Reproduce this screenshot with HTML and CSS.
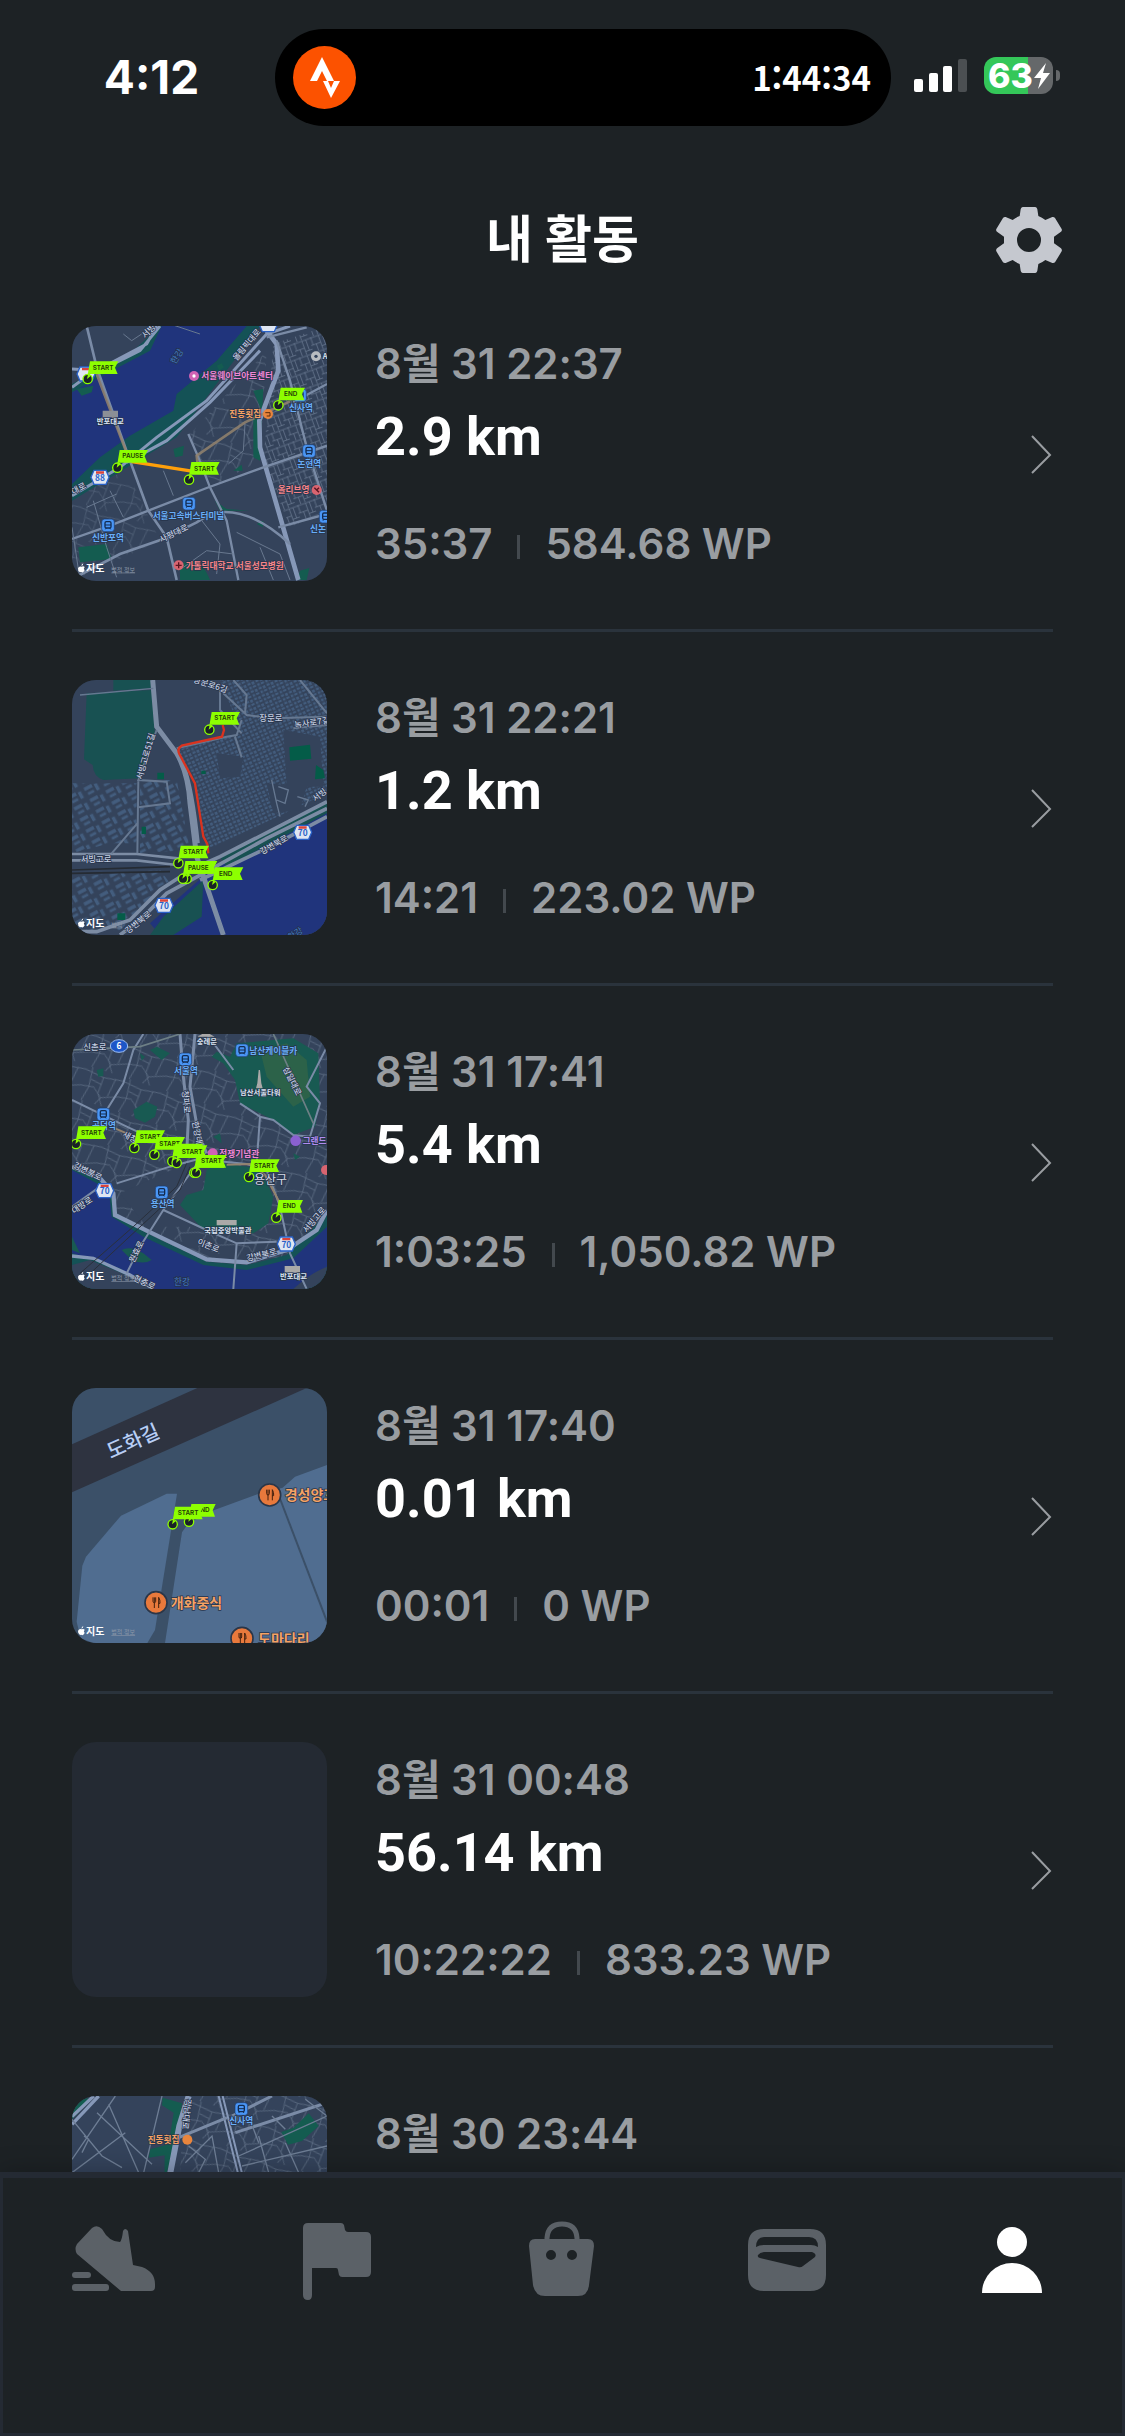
FILE: index.html
```html
<!DOCTYPE html>
<html lang="ko">
<head>
  <meta charset="UTF-8" />
  <meta name="viewport" content="width=device-width, initial-scale=1" />
  <title>내 활동</title>
  <link rel="stylesheet" href="styles.css">
</head>
<body>
  <!-- shared map symbols -->
  <svg class="defs" width="0" height="0" aria-hidden="true">
    <defs>
      <g id="flag">
        <path d="M7-53H92L82-34L90-15H4L2 0H-2Z" fill="#8dff00"/>
        <circle r="14" fill="#1a2127" stroke="#8dff00" stroke-width="4"/>
        <path d="M-2 0L1-14L10-10Z" fill="#8dff00"/>
      </g>
      <g id="flag-short">
        <path d="M7-53H80L71-34L78-15H4L2 0H-2Z" fill="#8dff00"/>
        <circle r="14" fill="#1a2127" stroke="#8dff00" stroke-width="4"/>
        <path d="M-2 0L1-14L10-10Z" fill="#8dff00"/>
      </g>
      <g id="station">
        <rect x="-19" y="-19" width="38" height="38" rx="9" fill="#4a96f5" stroke="#1c3a6b" stroke-width="2"/>
        <rect x="-9" y="-11" width="18" height="19" rx="4" fill="none" stroke="#132c52" stroke-width="4"/>
        <path d="M-9-1H9M-8 12L-5 8M8 12L5 8" stroke="#132c52" stroke-width="3"/>
      </g>
      <g id="shield">
        <path d="M-18-21H18L27 0L18 21H-18L-27 0Z" fill="#dfe6f2" stroke="#2a62c8" stroke-width="4"/>
        <path d="M-12-18H12V-11H-12Z" fill="#d9443c"/>
      </g>
      <g id="food">
        <circle r="33" fill="#e8793c" stroke="#2b3648" stroke-width="5"/>
        <path d="M-9-16V-4Q-9 0-5 0V16M-5-16V0M-1-16V-4Q-1 0-5 0M8-16V16M8-16Q13-8 12 2H8" fill="none" stroke="#43200e" stroke-width="3"/>
      </g>
      <g id="maps-logo">
        <path d="M-1-9Q0-15 5-17Q5-11-1-9M0-7Q5-10 9-6Q4 0 9 4Q5 12 1 10Q-2 8-5 10Q-12 6-11-2Q-8-10 0-7Z" fill="#fff"/>
      </g>
      <pattern id="streets" width="52" height="46" patternUnits="userSpaceOnUse" patternTransform="rotate(-20)">
        <path d="M0 3H52M0 25H30M30 36H52M6 0V25M30 3V46M42 3V36M16 25V46" stroke="#6d7d94" stroke-width="2" fill="none"/>
      </pattern>
      <pattern id="town" width="118" height="104" patternUnits="userSpaceOnUse" patternTransform="rotate(18)">
        <path d="M0 12L60 20L118 12M0 62L40 56L70 80L118 62M20 0L26 60L16 104M60 20L58 70L80 104M96 14L88 70M26 36L60 42M70 80L58 104" stroke="#64748a" stroke-width="2" fill="none"/>
      </pattern>
      <pattern id="houses" width="26" height="24" patternUnits="userSpaceOnUse" patternTransform="rotate(-24)">
        <path d="M2 2H11V9H2ZM15 3H23V11H15ZM3 14H10V22H3ZM14 15H24V21H14Z" fill="#435d7e"/>
      </pattern>
      <pattern id="blocks" width="54" height="38" patternUnits="userSpaceOnUse" patternTransform="rotate(-28)">
        <path d="M4 4H30V14H4ZM36 8H46V30H36ZM8 22H28V30H8Z" fill="#435d7e"/>
      </pattern>
    </defs>
  </svg>

  <div class="app">
    <div class="status-bar">
      <div class="clock">4:12</div>
      <div class="island">
        <svg class="island-logo" viewBox="0 0 63 63">
          <ellipse cx="50%" cy="50%" rx="50%" ry="50%" fill="#fc5200"/>
          <path d="M17 35L29 11L41 35H34L29 25L24 35Z" fill="#fff"/>
          <path d="M30 35H35L38 42L41 35H47L38 52Z" fill="#fff"/>
        </svg>
        <span class="island-time">1:44:34</span>
      </div>
      <div class="indicators">
        <svg class="signal" viewBox="0 0 53 33">
          <rect x="0" y="20" width="9" height="13" rx="2" fill="#fff"/>
          <rect x="15" y="14" width="9" height="19" rx="2" fill="#fff"/>
          <rect x="29" y="7" width="9" height="26" rx="2" fill="#fff"/>
          <rect x="44" y="0" width="9" height="33" rx="2" fill="#4b4f52"/>
        </svg>
        <div class="battery">
          <span>63</span>
          <svg class="bolt" viewBox="0 0 16 26"><path d="M12 0L0 15H7L4 26L16 10H9Z" fill="#fff"/></svg>
        </div>
      </div>
    </div>

    <header class="header">
      <h1>내 활동</h1>
      <button class="settings" aria-label="설정">
        <svg viewBox="0 0 198 198">
          <path fill="#c5c8cf" fill-rule="evenodd" d="M80 0H118Q123 1 124 7L127 27Q138 31 148 39L169 30Q174 29 177 33L197 66Q199 70 195 74L174 89V109L195 124Q199 128 197 133L177 166Q174 169 169 168L148 159Q138 167 127 171L124 191Q123 197 118 198H80Q75 197 74 191L71 171Q60 167 50 159L29 168Q24 169 21 166L1 133Q-1 128 3 124L24 109V89L3 74Q-1 70 1 66L21 33Q24 29 29 30L50 39Q60 31 71 27L74 7Q75 1 80 0ZM99 63A36 36 0 1 0 99 135A36 36 0 1 0 99 63Z"/>
        </svg>
      </button>
    </header>

    <main class="activities">
      <a class="activity" href="#">
        <svg class="thumb" viewBox="36 36 765 765">
          <rect x="36" y="36" width="765" height="765" fill="#34435b"/>
          <path d="M640 90L801 36V590L690 640L610 440Z" fill="url(#streets)"/>
          <path d="M390 360L620 110L600 440L450 520Z" fill="url(#town)"/>
          <path d="M36 540L200 470L300 680L36 800Z" fill="url(#town)" opacity=".7"/>
          <path d="M36 210L220 110L300 36H600L350 370L36 560Z" fill="#145256"/>
          <path d="M36 235L90 205L270 110L305 36H560L470 140L350 240L340 290L210 365L120 430L36 510Z" fill="#20347c"/>
          <path d="M50 225L100 215L95 235L65 245ZM470 155L485 148L492 160L478 170ZM580 230L610 225L600 440L580 430V300L600 280ZM340 405L372 395L368 425L345 430ZM520 470L545 452L548 470ZM55 700L140 690L155 735L60 745ZM720 770L748 762L740 798H712ZM360 750Q420 720 450 798H360ZM590 630L610 620L608 640ZM465 560L500 585L570 590H480Z" fill="#145c50"/>
          <g fill="none" stroke="#8698b8">
            <path d="M36 165L120 170L240 110L300 36M36 220L90 180L260 90L290 36" stroke-width="9"/>
            <path d="M36 545L180 460L290 370L440 260L620 60L690 36M200 445L320 380L450 265L600 110" stroke-width="9"/>
            <path d="M610 36L650 90L655 170L598 320L600 400L715 798" stroke-width="14"/>
            <path d="M36 675L150 635L290 580L440 522L610 460L801 395" stroke-width="7" stroke="#7a8ba6"/>
            <path d="M36 795L180 720L310 675L410 625L450 600Q560 570 690 690M80 36L110 160L210 440L265 590L320 670L350 798" stroke-width="8" stroke="#7a8ba6"/>
            <path d="M385 360L415 430L450 520L500 620L535 798M655 640L801 600M650 80L690 200L740 400L801 590M620 70L740 40M700 265L801 210" stroke-width="7" stroke="#7a8ba6"/>
            <path d="M100 560L140 700L170 790M310 470L340 545M150 530L190 610M80 580L170 540M36 640L60 798M370 760L440 710L520 720M530 655L660 720L690 798M410 600L480 690L470 780M420 60L330 30M190 60L215 80L245 60M555 330L550 410L505 450M600 700L640 798" stroke-width="3" stroke="#68788f"/>
          </g>
          <path d="M110 180L205 430M415 470L410 425L555 325L690 262" fill="none" stroke="#93826d" stroke-width="8" opacity=".85"/>
          <path d="M215 443L400 472" stroke="#ff9f0a" stroke-width="10"/>
          <use href="#shield" x="78" y="180"/><use href="#shield" x="120" y="490"/><use href="#shield" x="625" y="32"/>
          <text class="route" x="120" y="501">88</text>
          <circle cx="402" cy="186" r="15" fill="#cf62b4"/><circle cx="402" cy="186" r="5" fill="#fff"/>
          <circle cx="768" cy="127" r="15" fill="#b8bcc0"/><circle cx="768" cy="127" r="5" fill="#34435b"/>
          <text class="place pale" x="788" y="136">A</text>
          <circle cx="624" cy="300" r="15" fill="#e8853d"/><path d="M616 296H630V306H620" fill="none" stroke="#5a2a0c" stroke-width="3"/>
          <circle cx="770" cy="528" r="15" fill="#d86470"/><path d="M763 521L777 535M777 521L770 528" stroke="#5a1520" stroke-width="4"/>
          <circle cx="356" cy="754" r="15" fill="#d86470"/><path d="M356 745V763M347 754H365" stroke="#5a1520" stroke-width="4"/>
          <use href="#station" x="720" y="244"/><use href="#station" x="747" y="411"/><use href="#station" x="387" y="569"/><use href="#station" x="144" y="634"/><use href="#station" x="797" y="608"/>
          <text class="place pink" x="424" y="196">서울웨이브아트센터</text>
          <text class="place orange" x="508" y="310">진동횟집</text>
          <text class="place blue" x="687" y="291">신사역</text>
          <text class="place blue" x="712" y="458">논현역</text>
          <text class="place red" x="653" y="537">올리브영</text>
          <text class="place blue" x="278" y="614">서울고속버스터미널</text>
          <text class="place blue" x="96" y="680">신반포역</text>
          <text class="place blue" x="750" y="654">신논</text>
          <text class="place red" x="377" y="764">가톨릭대학교 서울성모병원</text>
          <text class="place pale" x="110" y="330">반포대교</text>
          <path d="M128 290H174V310H128Z" fill="#8b8f96"/>
          <text class="place water" transform="translate(346 152) rotate(-58)">한강</text>
          <text class="road" transform="translate(530 142) rotate(-50)">올림픽대로</text>
          <text class="road" transform="translate(304 686) rotate(-26)">사평대로</text>
          <text class="road" transform="translate(256 74) rotate(-45)">서빙</text>
          <text class="road" transform="translate(40 542) rotate(-28)">대로</text>
          <use href="#flag" x="83" y="195"/><text class="pin" x="129" y="168">START</text>
          <use href="#flag" x="172" y="461"/><text class="pin" x="218" y="433">PAUSE</text>
          <use href="#flag" x="387" y="497"/><text class="pin" x="433" y="470">START</text>
          <use href="#flag-short" x="655" y="274"/><text class="pin" x="692" y="247">END</text>
          <use href="#maps-logo" x="65" y="765"/><text class="brand" x="78" y="774">지도</text>
          <text class="legal" x="154" y="773">법적 정보</text>
        </svg>
        <div class="info">
          <time class="date">8월 31 22:37</time>
          <strong class="distance">2.9 km</strong>
          <div class="meta"><span>35:37</span><span>584.68 WP</span></div>
        </div>
        <svg class="chevron" viewBox="0 0 22 40"><path d="M1 2L19 21L1 39"/></svg>
      </a>

      <a class="activity" href="#">
        <svg class="thumb" viewBox="36 30 765 765">
          <rect x="36" y="30" width="765" height="765" fill="#34435b"/>
          <path d="M480 30H801V370L440 540L400 330L350 240L545 190Z" fill="url(#houses)"/>
          <path d="M36 340H230V520H150L36 550ZM240 330H350L390 540L240 550ZM36 620L300 600L330 640L180 780L36 795Z" fill="url(#blocks)"/>
          <path d="M470 250L550 260L540 320L480 325ZM670 180L780 200L790 350L680 350ZM620 340L740 350L720 420L640 430Z" fill="#34435b"/>
          <path d="M80 70L275 60L285 200L240 325L130 330Q100 320 98 285L72 268ZM160 30H275V55L160 62Z" fill="#185152"/>
          <path d="M688 232L750 224L754 266L690 272ZM768 285L790 300L795 325L765 328ZM292 308H312V328H292ZM245 470H258V492H245ZM172 730H196V750H172ZM424 302H437V312H424Z" fill="#045c48"/>
          <path d="M801 410L440 610L270 760L300 795H801Z" fill="#20347c"/>
          <path d="M801 395L640 480L480 560L500 590L801 430ZM430 630L310 740L270 795H340L425 740Z" fill="#185152"/>
          <g fill="none" stroke="#7c8ca4">
            <path d="M36 552H230L360 566M36 571H230L350 585" stroke-width="8"/>
            <path d="M278 30L290 170L350 250Q385 310 390 400L410 560L490 795M370 290Q395 360 412 520" stroke-width="15"/>
            <path d="M801 395L480 560L400 595L300 660L210 750L110 785H36M801 415L620 505L430 610L320 670L240 750L180 795M801 440L640 525L420 630" stroke-width="11"/>
            <path d="M235 330L232 550M290 180L235 330L320 335L330 400L235 412M232 460L155 550M350 235L500 200L530 195L545 150M480 60V120L545 190M490 70L560 135L640 145L801 140M720 30L801 130M700 175L801 165M525 200L545 262M520 30L560 75L555 130" stroke-width="6" stroke="#667891"/>
            <path d="M635 330L650 400L660 440M655 350L685 360L675 400L650 390M712 380L745 390L735 410M60 75L280 55" stroke-width="4" stroke="#667891"/>
          </g>
          <path d="M36 600L330 590M36 610L330 605" stroke="#252b33" stroke-width="5"/>
          <path d="M488 165L492 180L486 200L365 227Q350 235 358 252L405 340L430 500L442 522L445 550" fill="none" stroke="#d9331f" stroke-width="7"/>
          <use href="#shield" x="728" y="487"/><text class="route" x="728" y="498">70</text>
          <use href="#shield" x="312" y="706"/><text class="route" x="312" y="717">70</text>
          <text class="road" x="598" y="153">장문로</text>
          <text class="road" transform="translate(704 174) rotate(-8)">녹사로7길</text>
          <text class="road" transform="translate(398 36) rotate(18)">장문로6길</text>
          <text class="road" transform="translate(246 330) rotate(-74)">서빙고로51길</text>
          <text class="road" x="62" y="575">서빙고로</text>
          <text class="road" transform="translate(606 554) rotate(-29)">강변북로</text>
          <text class="road" transform="translate(204 792) rotate(-38)">강변북로</text>
          <text class="road" transform="translate(766 396) rotate(-38)">서빙</text>
          <text class="place water" transform="translate(690 812) rotate(-32)">한강</text>
          <use href="#flag" x="448" y="179"/><text class="pin" x="494" y="151">START</text>
          <use href="#flag" x="355" y="580"/><text class="pin" x="401" y="553">START</text>
          <use href="#flag" x="380" y="626"/>
          <use href="#flag" x="369" y="626"/><text class="pin" x="415" y="600">PAUSE</text>
          <use href="#flag" x="458" y="645"/><text class="pin" x="497" y="618">END</text>
          <use href="#maps-logo" x="65" y="762"/><text class="brand" x="78" y="770">지도</text>
          <text class="legal" x="154" y="770">법적</text>
        </svg>
        <div class="info">
          <time class="date">8월 31 22:21</time>
          <strong class="distance">1.2 km</strong>
          <div class="meta"><span>14:21</span><span>223.02 WP</span></div>
        </div>
        <svg class="chevron" viewBox="0 0 22 40"><path d="M1 2L19 21L1 39"/></svg>
      </a>

      <a class="activity" href="#">
        <svg class="thumb" viewBox="36 42 765 765">
          <rect x="36" y="42" width="765" height="765" fill="#34435b"/>
          <rect x="36" y="42" width="765" height="765" fill="url(#town)"/>
          <path d="M180 520L380 430L440 440L400 620H260Z" fill="#34435b"/>
          <path d="M530 70L700 55L775 100L780 250L765 320L700 345L640 300L540 250L525 180L490 130L455 110L470 95L510 110ZM220 270L260 245L292 260L285 290L255 308L225 295ZM440 450L480 430L600 445L640 530L625 610L580 640H440L360 555L380 525L430 510Z" fill="#185a52"/>
          <path d="M270 90L290 80L330 100L305 120ZM240 100L255 110L245 122ZM110 150L130 145V168L115 170ZM460 350L480 340L485 370ZM700 400L720 410L705 420Z" fill="#185a52"/>
          <path d="M600 90L680 70L740 120L750 230L700 260L620 170Z" fill="#2c6249"/>
          <path d="M36 440L120 480L160 510L170 580L260 640L440 725L560 735L680 705L801 580V807H36Z" fill="#145256"/>
          <path d="M36 450L110 490L148 525L155 590L250 650L430 735L560 750L700 715L801 620V740L700 807H260L180 745L36 700Z" fill="#20347c"/>
          <path d="M36 735L90 720L210 770L280 807H36Z" fill="#34435b"/>
          <path d="M185 690Q210 675 250 700L275 720Q250 735 215 720ZM36 650L60 700L36 690Z" fill="#185a52"/>
          <path d="M700 807Q750 760 801 740V807Z" fill="#34435b"/>
          <g fill="none" stroke="#8698b8">
            <path d="M36 440L120 475L160 520L165 585L260 632L440 718L560 727L680 690L770 630L801 570" stroke-width="13"/>
            <path d="M36 708L100 715L210 765L280 807" stroke-width="10"/>
            <path d="M360 42L370 170L385 300L380 400M405 42L390 200L415 340L440 400" stroke-width="9" stroke="#7a8ba6"/>
            <path d="M250 42L220 90L190 190L140 270M36 240L200 320L330 380L440 420L560 432L620 450L660 560L690 700L740 807M170 490L330 440L440 410M420 420L310 570L240 680L200 760M310 570L440 630L530 670L650 665M36 560L120 500M530 670L520 807M600 290L590 430M600 290L540 250M600 290L640 300L700 345L750 350L780 250L740 200L801 80M440 42L520 150" stroke-width="6" stroke="#7a8ba6"/>
            <path d="M640 42L760 310M36 90L240 80L360 42" stroke-width="5" stroke="#6d7f85"/>
            <path d="M380 430L350 500L220 620L60 760M390 440L360 510L230 630L80 770" stroke="#2a303c" stroke-width="3"/>
          </g>
          <path d="M500 434L570 432L615 465L660 550M165 325L200 340" fill="none" stroke="#93826d" stroke-width="6"/>
          <ellipse cx="177" cy="78" rx="26" ry="19" fill="#1d56c8" stroke="#9fc0f5" stroke-width="3"/>
          <text class="route light" x="177" y="87">6</text>
          <use href="#shield" x="134" y="512"/><text class="route" x="134" y="523">70</text>
          <use href="#shield" x="679" y="672"/><text class="route" x="679" y="683">70</text>
          <use href="#station" x="376" y="118"/><use href="#station" x="546" y="91"/><use href="#station" x="130" y="283"/><use href="#station" x="305" y="517"/>
          <circle cx="707" cy="362" r="16" fill="#8a60d0"/><circle cx="458" cy="400" r="15" fill="#cf62b4"/><circle cx="798" cy="450" r="15" fill="#d86470"/>
          <path d="M596 150H600L604 190L608 205H588L592 190ZM470 600H530V616H470ZM674 738H720V758H674ZM412 50L438 36L464 50Z" fill="#aaa9a8"/>
          <text class="road" x="70" y="90">신촌로</text>
          <text class="place pale" x="410" y="72">숭례문</text>
          <text class="place blue" x="568" y="102">남산케이블카</text>
          <text class="place blue" x="342" y="163">서울역</text>
          <text class="place pale" x="540" y="226">남산서울타워</text>
          <text class="place blue" x="96" y="328">공덕역</text>
          <text class="place purple" x="728" y="372">그랜드</text>
          <text class="place pink" x="478" y="410">전쟁기념관</text>
          <text class="district" x="582" y="491">용산구</text>
          <text class="place blue" x="272" y="562">용산역</text>
          <text class="place pale" x="433" y="638">국립중앙박물관</text>
          <text class="place pale" x="660" y="778">반포대교</text>
          <text class="place water" x="342" y="796">한강</text>
          <text class="road" transform="translate(366 212) rotate(84)">청파로</text>
          <text class="road" transform="translate(396 306) rotate(78)">한강대</text>
          <text class="road" transform="translate(668 146) rotate(63)">삼일대로</text>
          <text class="road" transform="translate(186 348) rotate(30)">새창</text>
          <text class="road" transform="translate(38 442) rotate(26)">강변북로</text>
          <text class="road" transform="translate(410 672) rotate(22)">이촌로</text>
          <text class="road" transform="translate(562 724) rotate(-14)">강변북로</text>
          <text class="road" transform="translate(740 640) rotate(-50)">서빙고로</text>
          <text class="road" transform="translate(222 730) rotate(-64)">원효로</text>
          <text class="road" transform="translate(42 582) rotate(-34)">대방로</text>
          <text class="road" transform="translate(218 780) rotate(26)">현충로</text>
          <use href="#flag" x="48" y="372"/><text class="pin" x="94" y="345">START</text>
          <use href="#flag" x="223" y="384"/><text class="pin" x="270" y="357">START</text>
          <use href="#flag" x="283" y="404"/><text class="pin" x="329" y="377">START</text>
          <use href="#flag" x="337" y="424"/>
          <use href="#flag" x="350" y="429"/><text class="pin" x="396" y="402">START</text>
          <use href="#flag" x="403" y="458"/>
          <use href="#flag" x="408" y="458"/><text class="pin" x="454" y="430">START</text>
          <use href="#flag" x="567" y="471"/><text class="pin" x="613" y="444">START</text>
          <use href="#flag-short" x="649" y="593"/><text class="pin" x="688" y="565">END</text>
          <use href="#maps-logo" x="65" y="772"/><text class="brand" x="78" y="781">지도</text>
          <text class="legal" x="154" y="780">법적 정보</text>
        </svg>
        <div class="info">
          <time class="date">8월 31 17:41</time>
          <strong class="distance">5.4 km</strong>
          <div class="meta"><span>1:03:25</span><span>1,050.82 WP</span></div>
        </div>
        <svg class="chevron" viewBox="0 0 22 40"><path d="M1 2L19 21L1 39"/></svg>
      </a>

      <a class="activity" href="#">
        <svg class="thumb" viewBox="36 39 765 765">
          <rect x="36" y="39" width="765" height="765" fill="#3b5068"/>
          <path d="M36 208L412 39H740L36 352Z" fill="#2e3340"/>
          <path d="M320 356H351L285 765L262 804H100L62 790L50 740L67 572L78 545L183 422Z" fill="#506d90"/>
          <path d="M801 270L705 305L668 338L600 355L455 408L385 445L366 472L315 804H801Z" fill="#506d90"/>
          <path d="M650 345L801 740" stroke="#3b5068" stroke-width="6"/>
          <text class="street" transform="translate(152 252) rotate(-24)">도화길</text>
          <use href="#food" x="629" y="360"/><text class="shop" x="674" y="376">경성양꼬</text>
          <use href="#food" x="288" y="683"/><text class="shop" x="332" y="700">개화중식</text>
          <use href="#food" x="546" y="790"/><text class="shop" x="594" y="806">도마다리</text>
          <use href="#flag-short" x="387" y="440"/><text class="pin" x="429" y="412">END</text>
          <use href="#flag" x="338" y="448"/><text class="pin" x="384" y="420">START</text>
          <use href="#maps-logo" x="65" y="770"/><text class="brand" x="78" y="779">지도</text>
          <text class="legal" x="154" y="778">법적 정보</text>
        </svg>
        <div class="info">
          <time class="date">8월 31 17:40</time>
          <strong class="distance">0.01 km</strong>
          <div class="meta"><span>00:01</span><span>0 WP</span></div>
        </div>
        <svg class="chevron" viewBox="0 0 22 40"><path d="M1 2L19 21L1 39"/></svg>
      </a>

      <a class="activity" href="#">
        <div class="thumb"></div>
        <div class="info">
          <time class="date">8월 31 00:48</time>
          <strong class="distance">56.14 km</strong>
          <div class="meta"><span>10:22:22</span><span>833.23 WP</span></div>
        </div>
        <svg class="chevron" viewBox="0 0 22 40"><path d="M1 2L19 21L1 39"/></svg>
      </a>

      <a class="activity" href="#">
        <svg class="thumb" viewBox="0 0 765 765">
          <rect width="765" height="765" fill="#34435b"/>
          <path d="M335 0H765V765H300Z" fill="url(#town)"/>
          <path d="M272 5L330 22L310 140L285 228V765H272L278 178L230 185L235 160L290 145L305 50L270 28ZM710 52L740 90L690 135L648 146L628 108L665 95ZM0 20L50 5L20 50L0 70Z" fill="#145c50"/>
          <g fill="none" stroke="#8698b8">
            <path d="M0 62L65 0M0 85L80 0" stroke-width="10"/>
            <path d="M350 0L322 90L295 230" stroke-width="18"/>
            <path d="M440 0L470 120L500 240M452 0L482 120L512 240" stroke-width="6"/>
            <path d="M480 60L600 0M320 125L465 65M490 110L765 20" stroke-width="9" stroke="#7a8ba6"/>
            <path d="M0 190L130 0M75 50L240 205M110 25L200 230M0 70L90 180L150 215M36 120L50 130L30 170M270 0L215 230M500 180L765 60M510 210L765 150M340 200L420 120L440 230M350 150L400 190L380 230M560 120L590 230M640 140L680 230M600 60L640 100M530 60L560 140M700 10L765 60M0 230L160 110" stroke-width="4" stroke="#6d7d94"/>
          </g>
          <use href="#station" x="508" y="39"/><text class="place blue" x="472" y="85">신사역</text>
          <text class="place orange" x="227" y="140">진동횟집</text><circle cx="346" cy="131" r="15" fill="#e8853d"/>
          <text class="road" transform="translate(340 8) rotate(96)">강남대로</text>
        </svg>
        <div class="info">
          <time class="date">8월 30 23:44</time>
          <strong class="distance">&nbsp;</strong>
          <div class="meta"><span>&nbsp;</span></div>
        </div>
      </a>
    </main>

    <nav class="tab-bar">
      <a href="#" aria-label="운동">
        <svg viewBox="0 0 84 84">
          <path d="M21 11Q26 7 31 12Q38 25 49 25Q51 23 52 14Q54 10 57 14L62 48L71 50Q84 55 84 67V70Q84 74 80 74H50L6 37Q3 32 6 27Z"/>
          <rect x="1" y="55" width="19" height="6" rx="3"/>
          <rect x="1" y="67" width="37" height="7" rx="3"/>
        </svg>
      </a>
      <a href="#" aria-label="챌린지">
        <svg viewBox="0 0 84 84">
          <path d="M12 6H45Q47 6 48 8L49 13Q50 15 52 15H70Q75 15 75 20V55Q75 60 70 60H46Q44 60 43 58L42 53Q42 51 40 51H16V78Q16 83 12 83Q7 83 7 78V11Q7 6 12 6Z"/>
        </svg>
      </a>
      <a href="#" aria-label="상점">
        <svg viewBox="0 0 84 84">
          <path fill-rule="evenodd" d="M14 22H67Q73 22 73 29L68 68Q67 79 57 79H24Q14 79 12 68L8 29Q8 22 14 22ZM30 33A5 5 0 1 0 30 43A5 5 0 1 0 30 33ZM51 33A5 5 0 1 0 51 43A5 5 0 1 0 51 33Z"/>
          <path class="line" d="M26 24V21Q27 7 41 7Q55 7 56 21V24"/>
        </svg>
      </a>
      <a href="#" aria-label="지갑">
        <svg viewBox="0 0 84 84">
          <path fill-rule="evenodd" d="M18 12H64Q80 12 80 28V58Q80 74 64 74H18Q2 74 2 58V28Q2 12 18 12ZM19 20Q10 20 10 30Q13 28 18 28H65Q69 28 72 30Q72 20 63 20ZM19 35Q14 35 12 38Q11 40 14 41L52 50Q55 51 57 49L69 40Q71 37 66 35Z"/>
        </svg>
      </a>
      <a class="active" href="#" aria-label="내 정보">
        <svg viewBox="0 0 84 84">
          <circle cx="41" cy="25" r="15"/>
          <path d="M11 76A30 30 0 0 1 71 76Z"/>
        </svg>
      </a>
    </nav>
  </div>
</body>
</html>
```

FILE: styles.css
```css
* {
  box-sizing: border-box;
}

body {
  margin: 0;
  background: #1d2225;
  color: #fff;
  font-family: Inter, "Noto Sans CJK KR", sans-serif;
}

.defs {
  position: absolute;
}

.app {
  display: flex;
  flex-direction: column;
  height: 100vh;
  overflow: hidden;
}

/* Status bar */
.status-bar {
  display: flex;
  align-items: center;
  height: 154px;
  flex: none;
}

.clock {
  width: 275px;
  padding-left: 28px;
  text-align: center;
  font-size: 46px;
  font-weight: 700;
}

.island {
  display: flex;
  align-items: center;
  justify-content: space-between;
  flex: 1;
  height: 97px;
  padding: 0 20px 0 18px;
  border-radius: 49px;
  background: #000;
}

.island-logo {
  width: 63px;
  height: 63px;
}

.island-time {
  font-family: "Noto Sans CJK KR", sans-serif;
  font-size: 33px;
  font-weight: 700;
}

.indicators {
  display: flex;
  align-items: center;
  gap: 17px;
  width: 234px;
  padding: 0 0 3px 23px;
}

.signal {
  width: 53px;
  height: 33px;
}

.battery {
  position: relative;
  display: flex;
  align-items: center;
  justify-content: space-between;
  width: 69px;
  height: 37px;
  padding: 0 3px 0 4px;
  border-radius: 12px;
  background: linear-gradient(to right, #34c759 64%, #65686a 64%);
  font-size: 34px;
  font-weight: 800;
  line-height: 37px;
}

.battery::after {
  content: "";
  position: absolute;
  right: -7px;
  top: 13px;
  width: 4px;
  height: 11px;
  border-radius: 0 4px 4px 0;
  background: #65686a;
}

.bolt {
  width: 16px;
  height: 26px;
}

/* Header */
.header {
  display: grid;
  grid-template-columns: 1fr auto 1fr;
  align-items: center;
  flex: none;
  height: 172px;
  padding: 0 63px;
}

.header h1 {
  grid-column: 2;
  margin: 0;
  font-size: 51px;
  font-weight: 700;
  line-height: 72px;
}

.settings {
  justify-self: end;
  width: 66px;
  height: 66px;
  padding: 0;
  border: none;
  background: none;
  cursor: pointer;
}

.settings svg {
  display: block;
}

/* Activity list */
.activities {
  flex: 1;
  min-height: 0;
  overflow: hidden;
  padding: 0 72px;
}

.activity {
  display: flex;
  align-items: center;
  padding-bottom: 48px;
  margin-bottom: 48px;
  border-bottom: 3px solid #2a333c;
  color: inherit;
  text-decoration: none;
}

.thumb {
  flex: none;
  width: 255px;
  height: 255px;
  border-radius: 24px;
  background: #242a33;
  overflow: hidden;
}

.info {
  flex: 1;
  padding-left: 48px;
}

.date,
.distance {
  display: block;
}

.date,
.meta {
  color: #999da1;
  font-size: 42px;
  font-weight: 600;
  line-height: 60px;
}

.distance {
  margin: 4px 0 38px;
  font-family: Roboto, sans-serif;
  font-size: 54px;
  font-weight: 700;
  line-height: 78px;
}

.meta {
  display: flex;
  align-items: center;
}

.meta span + span::before {
  content: "";
  display: inline-block;
  width: 3px;
  height: 24px;
  margin: 0 25px;
  background: #43494e;
}

.chevron {
  width: 22px;
  height: 40px;
  fill: none;
  stroke: #999da1;
  stroke-width: 2;
}

/* Map labels */
.place,
.road,
.route,
.shop,
.street,
.district,
.brand {
  font-family: "Noto Sans CJK KR", sans-serif;
}

.place,
.road,
.shop,
.street,
.district {
  paint-order: stroke;
  stroke: #26334a;
  stroke-width: 4px;
}

.place { font-size: 26px; font-weight: 700; }
.road { font-size: 25px; font-weight: 500; fill: #c3cde0; }
.route { font-size: 25px; font-weight: 700; fill: #2a62c8; text-anchor: middle; }
.route.light { fill: #fff; }
.shop { font-size: 42px; font-weight: 700; fill: #f5a264; }
.street { font-size: 60px; font-weight: 500; fill: #b9cdf2; }
.district { font-size: 36px; fill: #d4dae6; }
.brand { font-size: 30px; font-weight: 700; fill: #fff; }

.pink { fill: #ee86d4; }
.orange { fill: #f5a264; }
.blue { fill: #68adf7; }
.red { fill: #f58488; }
.purple { fill: #b08cf0; }
.pale { fill: #dbe3f2; font-size: 22px; }
.water { fill: #3f78c8; font-weight: 400; }

.legal {
  font-family: "Noto Sans CJK KR", sans-serif;
  font-size: 18px;
  fill: #8b97a8;
  text-decoration: underline;
}

.pin {
  font-family: Inter, sans-serif;
  font-size: 19px;
  font-weight: 600;
  fill: #1f3a08;
  text-anchor: middle;
}

/* Bottom tabs */
.tab-bar {
  position: relative;
  display: grid;
  grid-template-columns: repeat(5, 1fr);
  flex: none;
  height: 264px;
  padding-top: 42px;
  border-top: 3px solid #242a33;
  background: #1d2225;
  box-shadow: inset 0 0 0 3px #242a33, 0 0 24px rgba(0, 0, 0, 0.25);
}

.tab-bar a {
  display: flex;
  justify-content: center;
  align-items: flex-start;
}

.tab-bar svg {
  width: 84px;
  height: 84px;
  fill: #5b6167;
}

.tab-bar .line {
  fill: none;
  stroke: #5b6167;
  stroke-width: 5;
}

.tab-bar .active svg {
  fill: #fff;
}
```
